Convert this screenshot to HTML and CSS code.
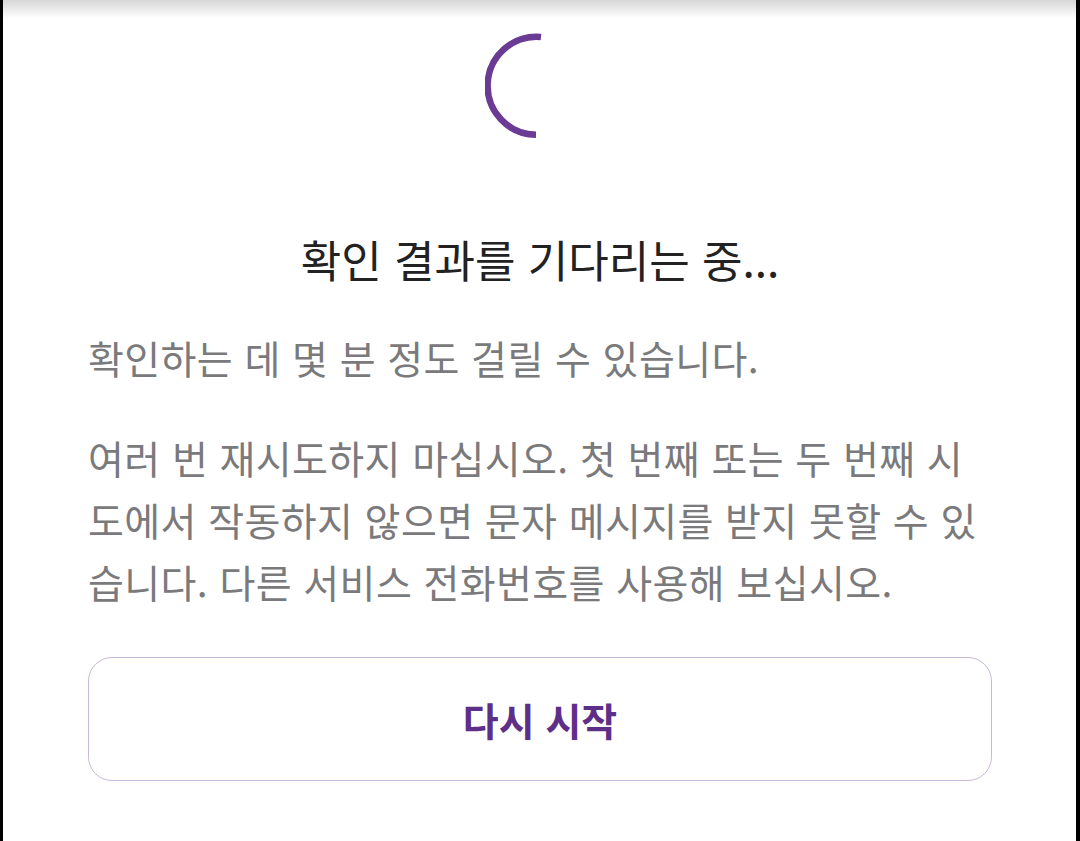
FILE: index.html
```html
<!DOCTYPE html>
<html lang="ko">
<head>
<meta charset="utf-8">
<title>확인 결과를 기다리는 중</title>
<link rel="stylesheet" href="styles.css">
</head>
<body>
<div class="screen">
  <div class="toolbar-shadow"></div>
  <main class="content">
    <div class="spinner">
      <svg width="110" height="110" viewBox="0 0 110 110" aria-hidden="true">
        <path d="M56 6 A49 49 0 1 0 51 103.8" fill="none" stroke="#6a3a94" stroke-width="6.5"/>
      </svg>
    </div>
    <h1 class="title">확인 결과를 기다리는 중...</h1>
    <p class="desc">확인하는 데 몇 분 정도 걸릴 수 있습니다.</p>
    <p class="desc multi">여러 번 재시도하지 마십시오. 첫 번째 또는 두 번째 시도에서 작동하지 않으면 문자 메시지를 받지 못할 수 있습니다. 다른 서비스 전화번호를 사용해 보십시오.</p>
    <button class="restart" type="button">다시 시작</button>
  </main>
</div>
</body>
</html>
```

FILE: styles.css
```css
html, body {
  margin: 0;
  padding: 0;
  height: 100%;
}

body {
  background: #000;
  font-family: "Noto Sans CJK KR", "Noto Sans", sans-serif;
}

.screen {
  position: relative;
  margin: 0 4px 0 3px;
  height: 841px;
  background: #fff;
  overflow: hidden;
}

.toolbar-shadow {
  position: absolute;
  top: 0;
  left: 0;
  right: 0;
  height: 18px;
  background: linear-gradient(to bottom, #d6d6d6, rgba(255, 255, 255, 0));
}

.content {
  display: flex;
  flex-direction: column;
  align-items: stretch;
  padding: 31px 84px 0 85px;
}

.spinner {
  display: flex;
  justify-content: center;
  height: 110px;
}

.title {
  margin: 90px 0 0;
  text-align: center;
  font-size: 44px;
  font-weight: 400;
  line-height: 56px;
  color: #222;
}

.desc {
  margin: 39px 0 0;
  font-size: 39px;
  line-height: 62px;
  letter-spacing: 0.4px;
  color: #7a7a7c;
  word-break: break-all;
}

.desc.multi {
  margin-top: 38px;
}

.restart {
  margin-top: 45px;
  height: 124px;
  border: 1.5px solid #c9b8d9;
  border-radius: 24px;
  background: #fff;
  font-family: inherit;
  font-size: 39px;
  font-weight: 700;
  color: #5e2f88;
}
```
